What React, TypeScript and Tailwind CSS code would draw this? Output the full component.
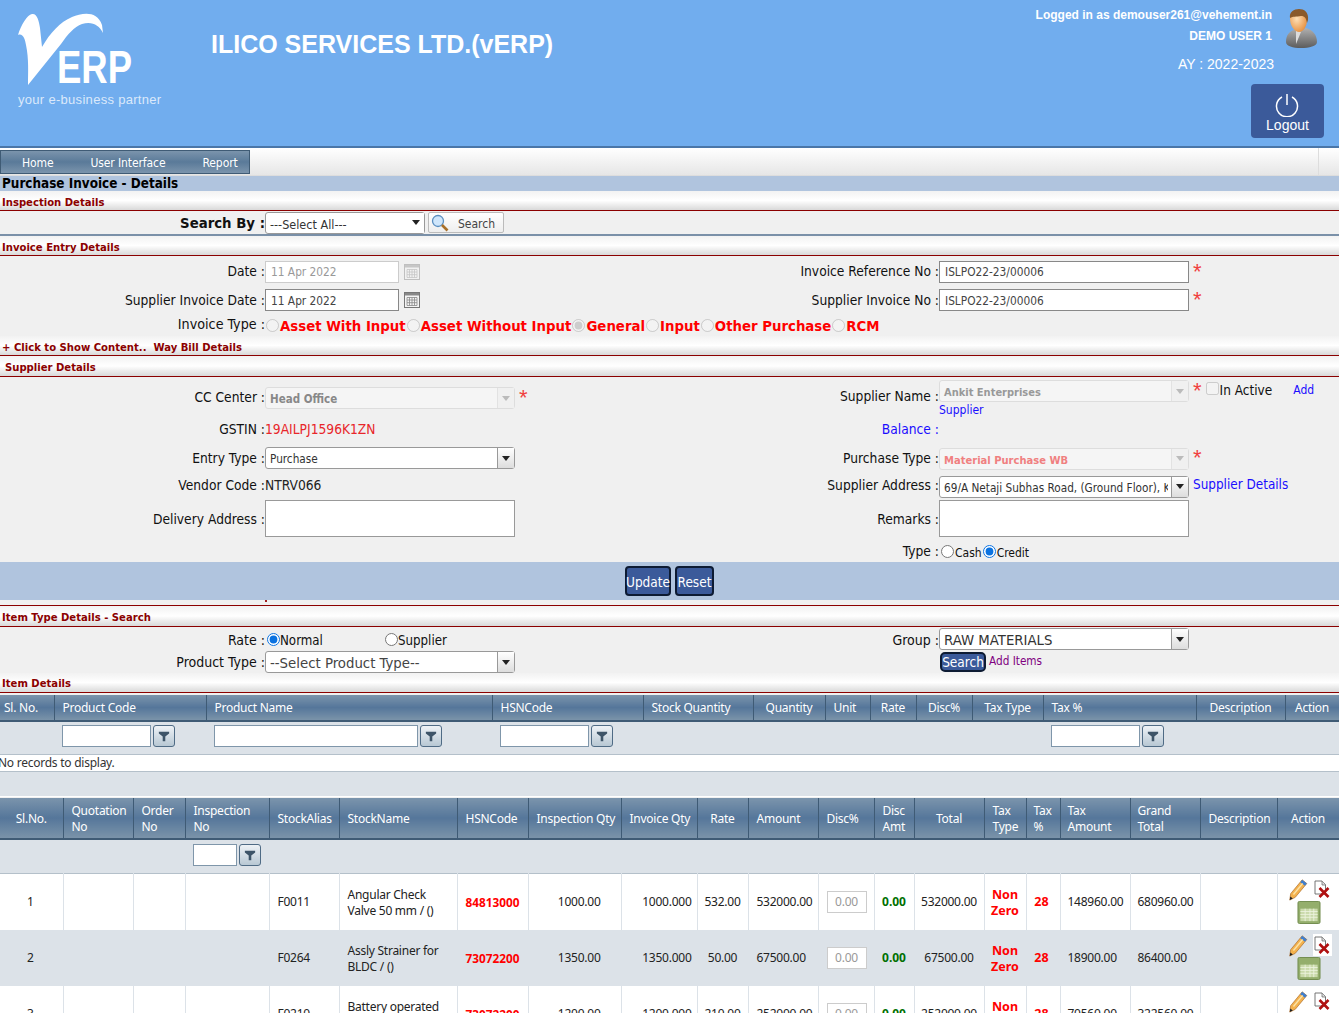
import React from 'react';

const uiFont = "font-['DejaVu_Sans',sans-serif] [font-stretch:condensed]";
const tableFont = "font-['Noto_Sans',sans-serif]";

const SectionHead = ({ title, className = '' }: { title: string; className?: string }) => (
  <div className={`h-[20px] flex items-center pt-[5px] bg-gradient-to-b from-[#f2f2f2] via-white to-[#d9d9d9] border-b border-[#8b0000] text-[11.2px] font-bold text-[#8b0000] pl-[2px] ${className}`}>
    {title}
  </div>
);

const Star = () => <span className="text-[#f04040] text-[22px] leading-none self-start ml-[4px] font-['Liberation_Sans',sans-serif]">*</span>;

const Select = ({ value, width, disabled, plain, textClass = 'text-[#333] text-[11.7px]', className = '' }: { value: string; width: string; disabled?: boolean; plain?: boolean; textClass?: string; className?: string }) => (
  <div className={`${width} h-[22px] flex rounded-[3px] border ${disabled ? 'border-[#ddd] bg-[#f5f5f5]' : 'border-[#999] bg-white'} ${className}`}>
    <div className={`flex-1 min-w-0 overflow-hidden whitespace-nowrap pl-[4px] mr-[3px] leading-[23px] ${textClass}`}>{value}</div>
    <div className={`w-[17px] flex items-center justify-center ${plain ? '' : 'border-l'} ${disabled ? 'border-[#e2e2e2] bg-[#f0f0f0]' : plain ? 'bg-white' : 'border-[#999] bg-gradient-to-b from-white to-[#ddd]'}`}>
      <span className={`w-0 h-0 border-l-[4px] border-r-[4px] border-t-[5px] border-l-transparent border-r-transparent ${disabled ? 'border-t-[#bbb]' : 'border-t-[#222]'}`} />
    </div>
  </div>
);

const TextBox = ({ value = '', width = 'w-[250px]', muted }: { value?: string; width?: string; muted?: boolean }) => (
  <input
    readOnly
    value={value}
    className={`${width} h-[22px] bg-white border pl-[5px] pt-[1px] text-[11.8px] outline-none ${muted ? 'border-[#ccc] text-[#999]' : 'border-[#888] text-[#444]'}`}
  />
);

const Radio = ({ checked, disabled, className = '' }: { checked?: boolean; disabled?: boolean; className?: string }) => (
  <input type="radio" readOnly checked={!!checked} disabled={disabled} className={`w-[13px] h-[13px] m-0 accent-[#0b72e0] ${className}`} />
);

const CalendarIcon = ({ muted }: { muted?: boolean }) => (
  <svg width="16" height="16" viewBox="0 0 16 16" className={muted ? 'opacity-40' : ''}>
    <rect x="0.5" y="0.5" width="15" height="15" fill="#f4f4f4" stroke="#777" />
    <rect x="1" y="1" width="14" height="2.5" fill="#888" />
    <path d="M3 5.5h10v8H3zM3 8h10M3 10.7h10M5.5 5.5v8M8 5.5v8M10.5 5.500v8" fill="none" stroke="#888" strokeWidth="0.8" />
  </svg>
);

const FilterBtn = () => (
  <div className="w-[22px] h-[22px] ml-[2px] shrink-0 rounded-[3px] border border-[#4f6b85] bg-gradient-to-b from-[#eef2f6] to-[#b8c8d4] flex items-center justify-center">
    <svg width="12" height="12" viewBox="0 0 14 14"><path d="M1 2h12v2L8.500 7.500V13h-3V7.500L1 4z" fill="#3d5468" /></svg>
  </div>
);

const FilterBox = ({ width }: { width: string }) => (
  <div className="flex items-center">
    <div className={`${width} h-[22px] bg-white border border-[#7f96aa]`} />
    <FilterBtn />
  </div>
);

const Pencil = () => (
  <svg width="21" height="23" viewBox="0 0 21 25">
    <path d="M14.500 2 L19.500 6 L7 21 L1 24 L2 17z" fill="#f4b24e" stroke="#a8641e" strokeWidth="0.7" />
    <path d="M14.500 2 L19.500 6 L17.500 8.500 L12.500 4.500z" fill="#3f7fd0" />
    <path d="M1 24 L1.600 20 L4.300 22.300z" fill="#222" />
    <path d="M5 18 L15 6" stroke="#fbe3a8" strokeWidth="1.500" />
  </svg>
);

const DeleteDoc = () => (
  <div className="w-[19px] h-[22px] bg-white flex items-center justify-center">
    <svg width="16" height="18" viewBox="0 0 16 18">
      <path d="M1 1h7l3.500 3.500V14H1z" fill="#fff" stroke="#666" strokeWidth="0.9" />
      <path d="M8 1v4h3.500" fill="#ddd" stroke="#666" strokeWidth="0.7" />
      <path d="M5.500 8l9 9M14.500 8l-9 9" stroke="#b01010" strokeWidth="2.600" />
    </svg>
  </div>
);

const GridIcon = () => (
  <svg width="24" height="23" viewBox="0 0 24 24">
    <rect x="0.500" y="0.500" width="23" height="23" rx="1.500" fill="#94ae6c" stroke="#6f8a4b" />
    <rect x="3" y="8" width="18" height="13" fill="#c9d9aa" />
    <path d="M3 11h18M3 14h18M3 17h18M8 8v13M13 8v13M17 8v13" stroke="#eef3e0" strokeWidth="0.900" />
  </svg>
);

const UserAvatar = () => (
  <svg width="34" height="40" viewBox="0 0 34 40">
    <defs>
      <linearGradient id="suit" x1="0" y1="0" x2="0" y2="1"><stop offset="0" stopColor="#b0b0b0" /><stop offset="1" stopColor="#5c5c5c" /></linearGradient>
      <radialGradient id="skin" cx="0.4" cy="0.4" r="0.7"><stop offset="0" stopColor="#fde0b8" /><stop offset="1" stopColor="#e58a35" /></radialGradient>
    </defs>
    <path d="M1 33c0-7 3-10 9-13l5 2 6-3c7 2 11 7 11 14 0 4-8 6-16 6S1 37 1 33z" fill="url(#suit)" />
    <path d="M11 21l5 2-5 12z" fill="#dcdcdc" />
    <path d="M5 10c0-6 4-9 9-9s8 4 8 10c0 7-4 12-8 12s-9-6-9-13z" fill="url(#skin)" />
    <path d="M5 9C4 3 9 0 14 0s10 3 9 11l-1 3c-1-5-2-7-6-7-5 1-8 0-11 2z" fill="#8a5a2b" />
  </svg>
);

const Logo = () => (
  <svg width="150" height="90" viewBox="0 0 150 90" className="absolute left-0 top-0">
    <path d="M18 35C21 25 27 15 32 14c5-1 7 7 8 14l2 19C50 33 60 22 72 17c10-4 25-7 30 8l1 8c-4-8-11-12-21-9-8 3-14 10-21 20L28 85c0-12 1-26-2-40-1-6-3-12-8-10z" fill="#fff" />
    <text x="57" y="83" fill="#fff" fontSize="46" fontWeight="700" fontFamily="'Liberation Sans', sans-serif" textLength="75" lengthAdjust="spacingAndGlyphs">ERP</text>
  </svg>
);

const Header = () => (
  <header className="relative h-[148px] bg-[#71adee] border-b-[2px] border-[#4a76a8] font-['Liberation_Sans',sans-serif] text-white">
    <Logo />
    <div className="absolute left-[18px] top-[90px] text-[13px] text-[#dbe9fb] tracking-[0.3px] whitespace-nowrap">your e-business partner</div>
    <div className="absolute left-[211px] top-[29px] text-[25px] leading-[30px] font-bold whitespace-nowrap">ILICO SERVICES LTD.(vERP)</div>
    <div className="absolute right-[67px] top-[8px] text-[12px] leading-[14px] font-bold whitespace-nowrap">Logged in as demouser261@vehement.in</div>
    <div className="absolute right-[67px] top-[29px] text-[12px] leading-[14px] font-bold whitespace-nowrap">DEMO USER 1</div>
    <div className="absolute right-[65px] top-[56px] text-[14px] leading-[16px] whitespace-nowrap">AY : 2022-2023</div>
    <div className="absolute left-[1285px] top-[9px]"><UserAvatar /></div>
    <div className="absolute left-[1251px] top-[84px] w-[73px] h-[54px] rounded-[4px] bg-[#3b5a9a] flex flex-col items-center pt-[9px]">
      <svg width="24" height="24" viewBox="0 0 24 24" fill="none" stroke="#fff" strokeWidth="1.500" className="-ml-[1px]"><path d="M12 1v11" /><path d="M7 4a10.500 10.500 0 1 0 10 0" /></svg>
      <div className="text-[14px] leading-[16px]">Logout</div>
    </div>
  </header>
);

const Nav = () => (
  <nav className="h-[28px] flex bg-gradient-to-b from-white to-[#e6e6e6] border-b border-[#ddd]">
    <div className="mt-[2px] h-[24px] w-[250px] flex items-center pt-[1px] border border-[#3f5b75] bg-gradient-to-b from-[#7b94ac] via-[#5a7a99] to-[#7b94ac] text-white text-[12px] tracking-[-0.1px]">
      <span className="ml-[21px]">Home</span>
      <span className="ml-[37px]">User Interface</span>
      <span className="ml-[37px]">Report</span>
    </div>
    <div className="ml-auto w-[21px] border-l border-[#ddd]" />
  </nav>
);

const Label = ({ children, className = '' }: { children: React.ReactNode; className?: string }) => (
  <div className={`text-right text-[13.7px] text-[#111] whitespace-nowrap ${className}`}>{children}</div>
);

const Row = ({ height, left, leftValue, right, rightValue }: { height: string; left?: React.ReactNode; leftValue?: React.ReactNode; right?: React.ReactNode; rightValue?: React.ReactNode }) => (
  <div className={`${height} grid grid-cols-[265px_325px_349px_400px] items-center`}>
    <Label>{left}</Label>
    <div className="flex items-center">{leftValue}</div>
    <Label>{right}</Label>
    <div className="flex items-center">{rightValue}</div>
  </div>
);

const InvoiceOption = ({ label, checked }: { label: string; checked?: boolean }) => (
  <>
    <Radio disabled checked={checked} />
    <span className="text-[14.8px] font-bold text-[#ff0000] ml-[1px] mr-[1px] pt-[2px]">{label}</span>
  </>
);

const InvoiceEntry = () => (
  <section className="h-[80px] bg-[#f0f0f0]">
    <Row
      height="h-[30px] pt-[1px]"
      left="Date :"
      leftValue={<><TextBox value="11 Apr 2022" width="w-[134px]" muted /><span className="ml-[5px]"><CalendarIcon muted /></span></>}
      right="Invoice Reference No :"
      rightValue={<><TextBox value="ISLPO22-23/00006" /><Star /></>}
    />
    <Row
      height="h-[28px]"
      left="Supplier Invoice Date :"
      leftValue={<><TextBox value="11 Apr 2022" width="w-[134px]" /><span className="ml-[5px]"><CalendarIcon /></span></>}
      right="Supplier Invoice No :"
      rightValue={<><TextBox value="ISLPO22-23/00006" /><Star /></>}
    />
    <div className="h-[22px] flex items-center">
      <Label className="w-[265px] shrink-0 !text-[14.2px]">Invoice Type :</Label>
      <div className="flex items-center ml-[1px]">
        <InvoiceOption label="Asset With Input" />
        <InvoiceOption label="Asset Without Input" />
        <InvoiceOption label="General" checked />
        <InvoiceOption label="Input" />
        <InvoiceOption label="Other Purchase" />
        <InvoiceOption label="RCM" />
      </div>
    </div>
  </section>
);

const SupplierDetails = () => (
  <section className="h-[185px] bg-[#f0f0f0]">
    <div className="h-[39px] grid grid-cols-[265px_325px_349px_400px]">
      <Label className="pt-[10px]">CC Center :</Label>
      <div className="flex pt-[10px]"><Select value="Head Office" width="w-[250px]" disabled textClass="text-[#888] text-[11.5px] font-bold" /><Star /></div>
      <Label className="pt-[9px]">Supplier Name :</Label>
      <div className="pt-[3px]">
        <div className="flex items-start">
          <Select value="Ankit Enterprises" width="w-[250px]" disabled textClass="text-[#999] text-[11px] font-bold" />
          <Star />
          <input type="checkbox" readOnly disabled className="w-[13px] h-[13px] m-0 ml-[4px] mt-[2px]" />
          <span className="text-[13.5px] text-[#111] ml-[1px]">In Active</span>
          <span className="text-[12px] text-[#1a0dff] ml-[21px] pt-[1px]">Add</span>
        </div>
        <div className="text-[12px] leading-[14px] text-[#1a0dff] mt-[1px]">Supplier</div>
      </div>
    </div>
    <Row height="h-[27px]" left="GSTIN :" leftValue={<span className="text-[13.7px] text-[#e8262a]">19AILPJ1596K1ZN</span>} right={<span className="text-[#1a0dff]">Balance :</span>} />
    <Row height="h-[30px]" left="Entry Type :" leftValue={<Select value="Purchase" width="w-[250px]" />} right="Purchase Type :" rightValue={<><Select value="Material Purchase WB" width="w-[250px]" disabled className="mt-[1px]" textClass="text-[#f08080] text-[11.1px] font-bold" /><Star /></>} />
    <Row height="h-[25px]" left="Vendor Code :" leftValue={<span className="text-[13.7px] text-[#222]">NTRV066</span>} right="Supplier Address :" rightValue={<><Select value="69/A Netaji Subhas Road, (Ground Floor), Kolkata" width="w-[250px]" className="mt-[2px]" /><span className="text-[13.4px] text-[#1a0dff] ml-[4px]">Supplier Details</span></>} />
    <Row
      height="h-[42px]"
      left="Delivery Address :"
      leftValue={<div className="w-[250px] h-[37px] -mt-[1px] bg-white border border-[#999]" />}
      right="Remarks :"
      rightValue={<div className="w-[250px] h-[37px] -mt-[1px] bg-white border border-[#999]" />}
    />
    <Row
      height="h-[22px]"
      right="Type :"
      rightValue={
        <div className="flex items-center text-[12px] text-[#111] pl-[2px]">
          <Radio /><span className="ml-[1px] mr-[1px] pt-[3px]">Cash</span><Radio checked /><span className="ml-[1px] pt-[3px]">Credit</span>
        </div>
      }
    />
  </section>
);

const DarkButton = ({ children, className = '' }: { children: React.ReactNode; className?: string }) => (
  <div className={`bg-[#3b5a9a] border-[2px] border-[#0d1b33] rounded-[4px] text-white flex items-center justify-center whitespace-nowrap ${className}`}>{children}</div>
);

const ItemTypeSearch = () => (
  <section className="h-[46px] bg-[#f0f0f0]">
    <div className="h-[24px] grid grid-cols-[265px_325px_349px_400px] items-center">
      <Label className="!text-[14px] pt-[2px]">Rate :</Label>
      <div className="flex items-center text-[13.2px] text-[#111] pl-[2px] pt-[1px]">
        <Radio checked /><span className="w-[105px] pt-[3px]">Normal</span><Radio /><span className="pt-[3px]">Supplier</span>
      </div>
      <Label className="!text-[14px] pt-[2px]">Group :</Label>
      <Select value="RAW MATERIALS" width="w-[250px]" textClass="text-[#333] text-[14.8px] !leading-[21px]" />
    </div>
    <div className="h-[22px] grid grid-cols-[265px_325px_349px_400px] items-center">
      <Label className="!text-[14px]">Product Type :</Label>
      <Select value="--Select Product Type--" width="w-[250px]" textClass="text-[#444] text-[14.8px] !leading-[21px]" />
      <div />
      <div className="flex items-center pl-[1px]">
        <DarkButton className="w-[46px] h-[20px] text-[13.5px] rounded-[5px]">Search</DarkButton>
        <span className="text-[11.7px] text-[#800080] ml-[3px]">Add Items</span>
      </div>
    </div>
  </section>
);

const thBase = 'border-r border-[#3f5b75] border-b-[2px] border-b-[#3f5b75] font-normal text-white text-[12px] tracking-[-0.25px] leading-[16px] px-[8px] align-middle bg-gradient-to-b from-[#7b94ac] via-[#55769a] to-[#7a93a9]';

const ItemDetailsCols = [
  { name: 'Sl. No.', w: 'w-[54px]', cls: 'text-left !pl-[4px]' },
  { name: 'Product Code', w: 'w-[152px]', cls: 'text-left' },
  { name: 'Product Name', w: 'w-[286px]', cls: 'text-left' },
  { name: 'HSNCode', w: 'w-[151px]', cls: 'text-left' },
  { name: 'Stock Quantity', w: 'w-[110px]', cls: 'text-left' },
  { name: 'Quantity', w: 'w-[72px]', cls: 'text-center' },
  { name: 'Unit', w: 'w-[45px]', cls: 'text-left' },
  { name: 'Rate', w: 'w-[46px]', cls: 'text-center' },
  { name: 'Disc%', w: 'w-[56px]', cls: 'text-center' },
  { name: 'Tax Type', w: 'w-[71px]', cls: 'text-center' },
  { name: 'Tax %', w: 'w-[153px]', cls: 'text-left' },
  { name: 'Description', w: 'w-[89px]', cls: 'text-center' },
  { name: 'Action', w: 'w-[54px]', cls: 'text-center' },
];

const ItemDetailsTable = () => (
  <table className={`w-[1339px] table-fixed border-collapse ${tableFont} mt-[2px]`}>
    <colgroup>{ItemDetailsCols.map((c) => <col key={c.name} className={c.w} />)}</colgroup>
    <thead>
      <tr className="h-[26px]">
        {ItemDetailsCols.map((c) => <th key={c.name} className={`${thBase} ${c.cls} whitespace-nowrap overflow-hidden pt-[1px]`}>{c.name}</th>)}
      </tr>
    </thead>
    <tbody>
      <tr className="h-[33px] bg-[#dce2e8] border-b border-[#b4c0ca]">
        {ItemDetailsCols.map((c) => (
          <td key={c.name} className="px-[8px] pb-[4px]">
            {c.name === 'Product Code' && <FilterBox width="w-[89px]" />}
            {c.name === 'Product Name' && <FilterBox width="w-[204px]" />}
            {c.name === 'HSNCode' && <FilterBox width="w-[89px]" />}
            {c.name === 'Tax %' && <FilterBox width="w-[89px]" />}
          </td>
        ))}
      </tr>
      <tr className="h-[17px] bg-white border-b border-[#b4c0ca]">
        <td colSpan={13} className="text-[12px] tracking-[-0.25px] leading-[14px] text-[#333] whitespace-nowrap p-0 pt-[1px]"><span className="block -ml-[2px]">No records to display.</span></td>
      </tr>
      <tr className="h-[25px] bg-[#dce2e8] border-b border-white"><td colSpan={13} /></tr>
    </tbody>
  </table>
);

const InvoiceCols = [
  { name: ['Sl.No.'], w: 'w-[63px]', cls: 'text-center' },
  { name: ['Quotation', 'No'], w: 'w-[70px]', cls: 'text-left' },
  { name: ['Order', 'No'], w: 'w-[52px]', cls: 'text-left' },
  { name: ['Inspection', 'No'], w: 'w-[84px]', cls: 'text-left' },
  { name: ['StockAlias'], w: 'w-[70px]', cls: 'text-left' },
  { name: ['StockName'], w: 'w-[118px]', cls: 'text-left' },
  { name: ['HSNCode'], w: 'w-[71px]', cls: 'text-left' },
  { name: ['Inspection Qty'], w: 'w-[93px]', cls: 'text-left' },
  { name: ['Invoice Qty'], w: 'w-[76px]', cls: 'text-left' },
  { name: ['Rate'], w: 'w-[51px]', cls: 'text-center' },
  { name: ['Amount'], w: 'w-[70px]', cls: 'text-left' },
  { name: ['Disc%'], w: 'w-[56px]', cls: 'text-left' },
  { name: ['Disc', 'Amt'], w: 'w-[40px]', cls: 'text-left' },
  { name: ['Total'], w: 'w-[70px]', cls: 'text-center' },
  { name: ['Tax', 'Type'], w: 'w-[42px]', cls: 'text-left' },
  { name: ['Tax', '%'], w: 'w-[34px]', cls: 'text-left !pl-[7px]' },
  { name: ['Tax', 'Amount'], w: 'w-[70px]', cls: 'text-left !pl-[7px]' },
  { name: ['Grand', 'Total'], w: 'w-[70px]', cls: 'text-left !pl-[7px]' },
  { name: ['Description'], w: 'w-[77px]', cls: 'text-center' },
  { name: ['Action'], w: 'w-[62px]', cls: 'text-center' },
];

const invoiceRows = [
  { sl: '1', alias: 'F0011', stock: ['Angular Check', 'Valve 50 mm / ()'], hsn: '84813000', insp: '1000.00', qty: '1000.000', rate: '532.00', amount: '532000.00', total: '532000.00', taxAmt: '148960.00', grand: '680960.00' },
  { sl: '2', alias: 'F0264', stock: ['Assly Strainer for', 'BLDC / ()'], hsn: '73072200', insp: '1350.00', qty: '1350.000', rate: '50.00', amount: '67500.00', total: '67500.00', taxAmt: '18900.00', grand: '86400.00' },
  { sl: '3', alias: 'F0210', stock: ['Battery operated', 'Valve / ()'], hsn: '73072200', insp: '1200.00', qty: '1200.000', rate: '210.00', amount: '252000.00', total: '252000.00', taxAmt: '70560.00', grand: '322560.00' },
];

const td = 'border-r border-[#dce2e8] text-[12px] tracking-[-0.25px] leading-[16px] text-[#222] px-[8px] pt-[1px] align-middle';

const InvoiceTable = () => (
  <table className={`w-[1339px] table-fixed border-collapse ${tableFont} mt-[1px]`}>
    <colgroup>{InvoiceCols.map((c) => <col key={c.name.join()} className={c.w} />)}</colgroup>
    <thead>
      <tr className="h-[41px]">
        {InvoiceCols.map((c) => (
          <th key={c.name.join()} className={`${thBase} ${c.cls} whitespace-nowrap overflow-hidden pt-[3px]`}>
            {c.name.map((n) => <div key={n}>{n}</div>)}
          </th>
        ))}
      </tr>
    </thead>
    <tbody>
      <tr className="h-[35px] bg-[#dce2e8] border-b border-[#b4c0ca]">
        <td colSpan={3} />
        <td className="px-[8px] pb-[2px]"><FilterBox width="w-[44px]" /></td>
        <td colSpan={16} />
      </tr>
      {invoiceRows.map((r, i) => (
        <tr key={r.sl} className={`h-[56px] ${i % 2 ? 'bg-[#dce2e8]' : 'bg-white'}`}>
          <td className={`${td} text-center !pr-[10px]`}>{r.sl}</td>
          <td className={td} />
          <td className={td} />
          <td className={td} />
          <td className={td}>{r.alias}</td>
          <td className={`${td} !pt-[2px]`}>{r.stock.map((s) => <div key={s} className="whitespace-nowrap">{s}</div>)}</td>
          <td className={`${td} font-bold !text-[11.8px] !tracking-normal !text-[#ff0000]`}>{r.hsn}</td>
          <td className={`${td} text-right !pr-[20px]`}>{r.insp}</td>
          <td className={`${td} text-right !pr-[5px]`}>{r.qty}</td>
          <td className={`${td} text-center !px-0`}>{r.rate}</td>
          <td className={td}>{r.amount}</td>
          <td className={td}><div className="w-[40px] h-[22px] bg-white border border-[#ccc] text-[#999] text-center leading-[20px]">0.00</div></td>
          <td className={`${td} font-bold !text-[#007000] text-center !px-0 !tracking-normal`}>0.00</td>
          <td className={`${td} text-center !px-0`}>{r.total}</td>
          <td className={`${td} font-bold !text-[#ff0000] text-center !px-0 !pt-[2px] !text-[12.5px] !tracking-normal`}><div>Non</div><div>Zero</div></td>
          <td className={`${td} font-bold !text-[#ff0000] text-center !px-0 !pr-[3px] !text-[12.5px] !tracking-normal`}>28</td>
          <td className={`${td} !pl-[7px]`}>{r.taxAmt}</td>
          <td className={`${td} !pl-[7px]`}>{r.grand}</td>
          <td className={td} />
          <td className="align-top p-0">
            <div className="flex flex-col items-center pt-[4px]">
              <div className="flex items-start gap-[4px] ml-[3px]"><Pencil /><DeleteDoc /></div>
              <div className="ml-[1px]"><GridIcon /></div>
            </div>
          </td>
        </tr>
      ))}
    </tbody>
  </table>
);

export default function App() {
  return (
    <div className={`w-[1339px] h-[1013px] overflow-hidden bg-[#f0f0f0] ${uiFont}`}>
      <Header />
      <Nav />
      <div className="h-[15px] bg-[#b0c4de] text-[13.4px] leading-[15px] font-bold text-black pl-[2px]">Purchase Invoice - Details</div>
      <SectionHead title="Inspection Details" />
      <div className="h-[25px] bg-[#f0f0f0] border-b-[2px] border-[#7a90a8] flex items-center">
        <div className="w-[265px] text-right text-[14.8px] font-bold text-[#111] pt-[2px]">Search By :</div>
        <Select value="---Select All---" width="w-[160px]" plain textClass="text-[#333] text-[12.5px]" />
        <div className="ml-[3px] w-[76px] h-[21px] rounded-[2px] border border-[#bbb] bg-gradient-to-b from-white to-[#eee] flex items-center text-[12px] text-[#444]">
          <svg width="18" height="18" viewBox="0 0 18 18" className="ml-[2px]"><circle cx="7" cy="7" r="5.500" fill="#cfe6fb" stroke="#5b8fc0" strokeWidth="1.300" /><path d="M11 11l5.500 5.500" stroke="#a8702a" strokeWidth="2.600" /></svg>
          <span className="ml-[9px] pt-[2px]">Search</span>
        </div>
      </div>
      <SectionHead title="Invoice Entry Details" />
      <InvoiceEntry />
      <SectionHead title="+ Click to Show Content..  Way Bill Details" className="whitespace-pre" />
      <SectionHead title="Supplier Details" className="h-[21px] !pl-[5px]" />
      <SupplierDetails />
      <div className="h-[38px] bg-[#b0c4de] flex items-center justify-center gap-[4px]">
        <DarkButton className="w-[46px] h-[30px] text-[13.5px] pt-[2px]">Update</DarkButton>
        <DarkButton className="w-[39px] h-[30px] text-[13.5px] pt-[2px]">Reset</DarkButton>
      </div>
      <div className="h-[6px] border-b border-[#8b0000]">
        <div className="ml-[265px] w-[2px] h-[2px] bg-[#a02020]" />
      </div>
      <SectionHead title="Item Type Details - Search" className="h-[21px] !pt-[4px]" />
      <ItemTypeSearch />
      <SectionHead title="Item Details" className="!pt-[4px]" />
      <ItemDetailsTable />
      <InvoiceTable />
    </div>
  );
}
